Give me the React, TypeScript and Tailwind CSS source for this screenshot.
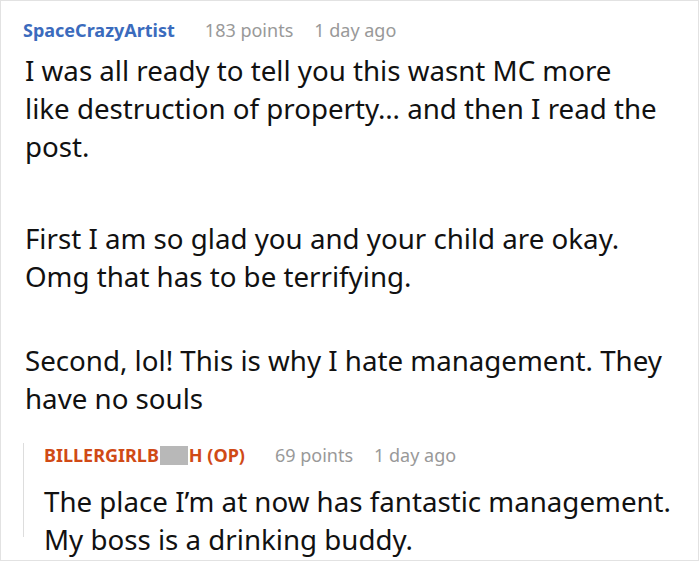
import React from "react";

export default function App() {
  return (
    <div className="w-[700px] h-[562px] bg-white overflow-hidden" style={{ fontFamily: '"Noto Sans", sans-serif' }}>
      <div className="w-[699px] h-[561px] border border-[#e2e2e2] pl-[22px] pt-[17px] pr-2">
        <div className="flex items-baseline text-[18px] leading-[24px]">
          <span className="font-bold text-[#3b6bbd]">SpaceCrazyArtist</span>
          <span className="ml-[30px] text-[#999999]">183 points</span>
          <span className="ml-[21px] text-[#999999]">1 day ago</span>
        </div>
        <div className="text-[27.7px] leading-[38px] text-[#111111] mt-[9px] pl-[2px] whitespace-nowrap">
          <p>
            I was all ready to tell you this wasnt MC more
            <br />
            like destruction of property… and then I read the
            <br />
            post.
          </p>
          <p className="mt-[54px]">
            First I am so glad you and your child are okay.
            <br />
            Omg that has to be terrifying.
          </p>
          <p className="mt-[46px]">
            Second, lol! This is why I hate management. They
            <br />
            have no souls
          </p>
        </div>
        <div className="mt-[35px] border-l border-[#dddddd] pl-[20px] h-[94px]">
          <div className="-mt-[9px] flex items-baseline text-[18px] leading-[24px]">
            <span className="font-bold text-[#d04a16] flex items-baseline">
              BILLERGIRLB
              <span className="inline-block w-[28px] h-[19px] bg-[#b8b8b8] self-center mx-[1px]"></span>
              H (OP)
            </span>
            <span className="ml-[30px] text-[#999999]">69 points</span>
            <span className="ml-[21px] text-[#999999]">1 day ago</span>
          </div>
          <div className="text-[27.7px] leading-[38px] text-[#111111] mt-[15px] whitespace-nowrap">
            <p>
              The place I’m at now has fantastic management.
              <br />
              My boss is a drinking buddy.
            </p>
          </div>
        </div>
      </div>
    </div>
  );
}
